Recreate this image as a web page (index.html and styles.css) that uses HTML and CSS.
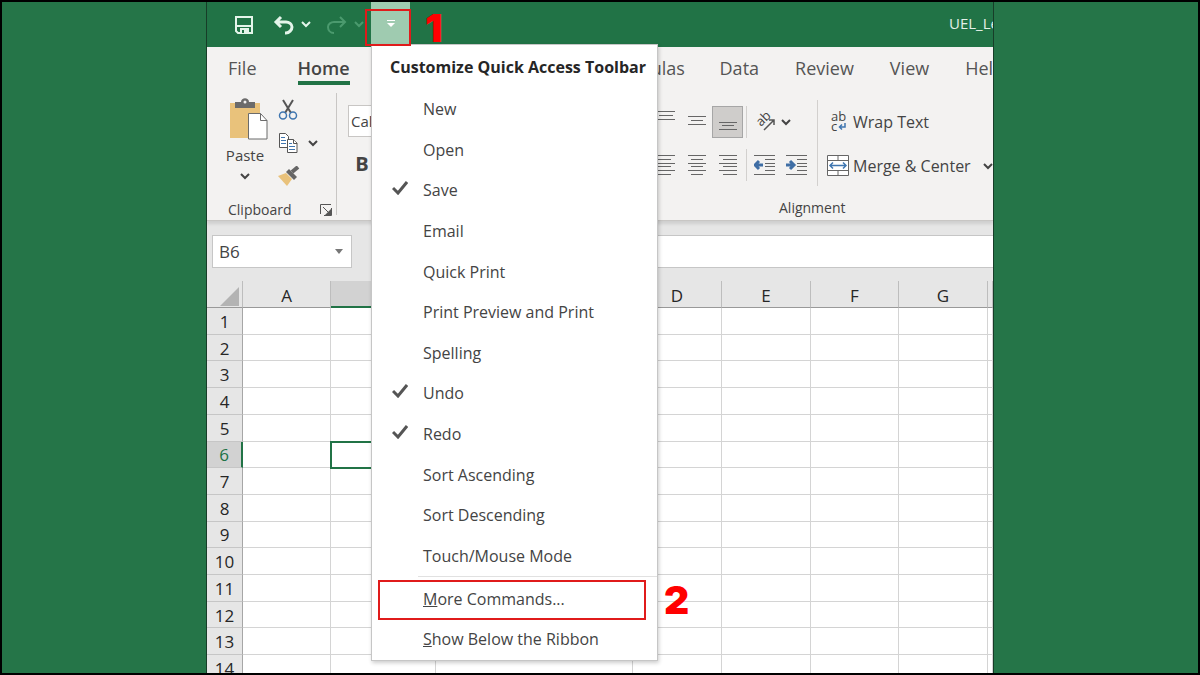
FILE: index.html
```html
<!DOCTYPE html>
<html lang="en">
<head>
    <meta charset="UTF-8">
    <meta name="viewport" content="width=device-width, initial-scale=1.0">
    <title>Customize Quick Access Toolbar</title>
    <link rel="stylesheet" href="styles.css">
</head>
<body>
    <div class="window">
        <header class="titlebar">
            <button class="tool save" aria-label="Save">
                <svg width="20" height="20" viewBox="0 0 20 20" fill="none" stroke="#e4f5ea" stroke-width="2"><path d="M2 2h16v16H4l-2-2zM2 11h16"/><path d="M6 13h9v5H6z" fill="#e4f5ea" stroke="none"/><path d="M8 15h2v3H8z" fill="#217346" stroke="none"/></svg>
            </button>
            <button class="tool" aria-label="Undo">
                <svg width="22" height="20" viewBox="0 0 22 20" fill="none" stroke="#e4f5ea" stroke-width="3"><path d="M8 2L3 7l5 5M3 7h10c3 0 6 2 6 5s-3 6-6 6h-1"/></svg>
            </button>
            <button class="tool arrow" aria-label="Undo list">
                <svg width="10" height="8" viewBox="0 0 10 8" fill="none" stroke="#e4f5ea" stroke-width="2"><path d="M1 1l4 4 4-4"/></svg>
            </button>
            <button class="tool redo" aria-label="Redo">
                <svg width="22" height="20" viewBox="0 0 22 20" fill="none" stroke="#4b9a6e" stroke-width="2"><path d="M14 2l5 5-5 5M19 7H8c-3 0-6 2-6 5s2 6 6 6"/></svg>
            </button>
            <button class="tool arrow" aria-label="Redo list">
                <svg width="10" height="8" viewBox="0 0 10 8" fill="none" stroke="#4b9a6e" stroke-width="2"><path d="M1 1l4 4 4-4"/></svg>
            </button>
            <div class="customize">
                <button class="customize-button" aria-label="Customize Quick Access Toolbar">
                    <svg width="8" height="8" viewBox="0 0 8 8" fill="#fff"><path d="M0 0h8v1H0zM0 3h8L4 7z"/></svg>
                </button>
                <div class="mark mark-one"></div>
                <span class="number number-one">1</span>

                <!-- Dropdown menu -->
                <div class="menu">
                    <h2>Customize Quick Access Toolbar</h2>
                    <div class="menu-list">
                        <button>New</button>
                        <button>Open</button>
                        <button class="checked"><svg class="check" viewBox="0 0 16 14"><path d="M1 7l5 5 9-11"/></svg>Save</button>
                        <button>Email</button>
                        <button>Quick Print</button>
                        <button>Print Preview and Print</button>
                        <button>Spelling</button>
                        <button class="checked"><svg class="check" viewBox="0 0 16 14"><path d="M1 7l5 5 9-11"/></svg>Undo</button>
                        <button class="checked"><svg class="check" viewBox="0 0 16 14"><path d="M1 7l5 5 9-11"/></svg>Redo</button>
                        <button>Sort Ascending</button>
                        <button>Sort Descending</button>
                        <button>Touch/Mouse Mode</button>
                    </div>
                    <div class="menu-more">
                        <button><u>M</u>ore Commands...</button>
                        <button><u>S</u>how Below the Ribbon</button>
                    </div>
                    <div class="mark mark-two"></div>
                    <span class="number number-two">2</span>
                </div>
            </div>
            <span class="filename">UEL_Learning</span>
        </header>

        <nav class="tabs">
            <a href="#">File</a>
            <a href="#" class="active">Home</a>
            <a href="#" class="formulas">Formulas</a>
            <a href="#">Data</a>
            <a href="#">Review</a>
            <a href="#">View</a>
            <a href="#">Help</a>
        </nav>

        <section class="ribbon">
            <div class="group clipboard">
                <div class="group-body">
                    <button class="paste">
                        <svg width="38" height="42" viewBox="0 0 38 42"><path d="M0 5h30v35H0z" fill="#e9c27b"/><path d="M5 4h6c0-5 8-5 8 0h6v6H5z" fill="#6b6b6b"/><circle cx="15" cy="4" r="1.5" fill="#f3f2f1"/><path d="M18.500 15.500h12l6.500 7v18.500H18.500z" fill="#fff" stroke="#6b6b6b"/><path d="M30.500 15.500v7H37" fill="none" stroke="#6b6b6b"/></svg>
                        <span>Paste</span>
                        <svg width="10" height="8" viewBox="0 0 10 8" class="chevron"><path d="M1 2l4 4 4-4"/></svg>
                    </button>
                    <div class="clip-tools">
                        <button aria-label="Cut">
                            <svg width="20" height="22" viewBox="0 0 20 22" fill="none"><path d="M5 1l8 13M15 1L7 14" stroke="#555" stroke-width="2"/><circle cx="5" cy="16.500" r="3.500" stroke="#3f76b0" stroke-width="1.500"/><circle cx="15" cy="16.500" r="3.500" stroke="#3f76b0" stroke-width="1.500"/></svg>
                        </button>
                        <button aria-label="Copy" class="copy">
                            <svg width="20" height="22" viewBox="0 0 20 22" fill="#fff" stroke="#555"><path d="M1.500 1.500h6l3 3v11h-9z"/><path d="M3 5.500h4M3 8.500h5M3 11.500h5" stroke="#3f76b0"/><path d="M9.500 7.500h6l3.500 3.500v9.500H9.500z"/><path d="M15.500 7.500v4H19"/><path d="M11 11.500h3M11 14.500h6M11 17.500h6" stroke="#3f76b0"/></svg>
                            <svg width="10" height="8" viewBox="0 0 10 8" class="chevron"><path d="M1 2l4 4 4-4"/></svg>
                        </button>
                        <button aria-label="Format Painter">
                            <svg width="22" height="20" viewBox="0 0 22 20"><path d="M0 10l8-3 6 6-5 7z" fill="#e9c27b"/><path d="M8 6l3-3 8 8-3 3z" fill="#666"/><path d="M14 6l6-5" stroke="#666" stroke-width="4"/></svg>
                        </button>
                    </div>
                </div>
                <div class="group-name">
                    <span>Clipboard</span>
                    <button aria-label="Clipboard options">
                        <svg width="12" height="12" viewBox="0 0 12 12" fill="none" stroke="#555"><path d="M.5 10V.5H11M3 3l7 7M11.500 4v7.500H4"/><path d="M5 11h6V5z" fill="#555" stroke="none"/></svg>
                    </button>
                </div>
            </div>

            <div class="group font">
                <input type="text" value="Calibri" aria-label="Font">
                <button class="bold">B</button>
            </div>

            <div class="group alignment">
                <div class="group-body">
                    <div class="align-rows">
                        <div class="align-row">
                            <button aria-label="Top Align"><svg width="18" height="22" viewBox="0 0 18 22" class="lines"><path d="M0 .5h18M2 4.500h14M0 8.500h18"/></svg></button>
                            <button aria-label="Middle Align"><svg width="18" height="22" viewBox="0 0 18 22" class="lines"><path d="M0 5.500h18M3 9.500h12M0 13.500h18"/></svg></button>
                            <button aria-label="Bottom Align" class="pressed"><svg width="18" height="22" viewBox="0 0 18 22" class="lines"><path d="M0 11.500h18M3 14.500h12M0 18.500h18"/></svg></button>
                            <button aria-label="Orientation" class="orientation">
                                <svg width="20" height="20" viewBox="0 0 20 20"><text x="0" y="0" transform="translate(5 15) rotate(-45)" class="icon-text">ab</text><path d="M8 18L18 8M13 8h5v5" fill="none" stroke="#555" stroke-width="1.500"/></svg>
                                <svg width="10" height="8" viewBox="0 0 10 8" class="chevron"><path d="M1 2l4 4 4-4"/></svg>
                            </button>
                        </div>
                        <div class="align-row">
                            <button aria-label="Align Left"><svg width="18" height="20" viewBox="0 0 18 20" class="lines"><path d="M0 .5h18M0 4.500h14M0 8.500h18M0 11.500h14M0 15.500h18M0 19.500h14"/></svg></button>
                            <button aria-label="Center"><svg width="18" height="20" viewBox="0 0 18 20" class="lines"><path d="M0 .5h18M3 4.500h12M0 8.500h18M3 11.500h12M0 15.500h18M3 19.500h12"/></svg></button>
                            <button aria-label="Align Right"><svg width="18" height="20" viewBox="0 0 18 20" class="lines"><path d="M0 .5h18M4 4.500h14M0 8.500h18M4 11.500h14M0 15.500h18M4 19.500h14"/></svg></button>
                            <button aria-label="Decrease Indent" class="indent"><svg width="21" height="20" viewBox="0 0 21 20" class="lines"><path d="M0 .5h21M11 4.500h10M11 8.500h10M11 11.500h10M11 15.500h10M0 19.500h21"/><path d="M9 10H2M5 6l-4 4 4 4" class="blue"/></svg></button>
                            <button aria-label="Increase Indent"><svg width="21" height="20" viewBox="0 0 21 20" class="lines"><path d="M0 .5h21M11 4.500h10M11 8.500h10M11 11.500h10M11 15.500h10M0 19.500h21"/><path d="M0 10h7M4 6l4 4-4 4" class="blue"/></svg></button>
                        </div>
                    </div>
                    <div class="wrap-tools">
                        <button>
                            <svg width="22" height="22" viewBox="0 0 22 22"><text x="4" y="10" class="icon-text">ab</text><text x="4" y="20" class="icon-text">c</text><path d="M18 12v4h-5M15 13.500L12.500 16l2.500 2.500" fill="none" stroke="#3f76b0" stroke-width="1.500"/></svg>
                            <span>Wrap Text</span>
                        </button>
                        <button>
                            <svg width="22" height="22" viewBox="0 0 22 22" fill="none" stroke="#666"><path d="M.5 .5h21v20H.5z" fill="#fff"/><path d="M.5 5.500h21M.5 15.500h21M11 .5v5M11 15.500v5"/><path d="M3 10.500h16M6 7.500l-3 3 3 3M16 7.500l3 3-3 3" stroke="#3f76b0" stroke-width="1.500"/></svg>
                            <span>Merge &amp; Center</span>
                            <svg width="10" height="8" viewBox="0 0 10 8" class="chevron"><path d="M1 2l4 4 4-4"/></svg>
                        </button>
                    </div>
                </div>
                <div class="group-name"><span>Alignment</span></div>
            </div>
        </section>

        <div class="formula-bar">
            <div class="name-box">
                <input type="text" value="B6" aria-label="Name Box">
                <svg width="8" height="5" viewBox="0 0 8 5"><path d="M0 0h8L4 5z" fill="#777"/></svg>
            </div>
            <input type="text" class="formula" aria-label="Formula Bar">
        </div>

        <div class="sheet">
            <table>
                <colgroup>
                    <col class="col-head"><col class="col-a"><col class="col-b"><col class="col-c"><col class="col-d"><col class="col-d"><col class="col-a"><col class="col-d"><col>
                </colgroup>
                <thead>
                    <tr><th class="corner"><svg width="19" height="19" viewBox="0 0 19 19"><path d="M19 0v19H0z" fill="#b3b3b3"/></svg></th><th>A</th><th class="selected"></th><th></th><th>D</th><th>E</th><th>F</th><th>G</th><th></th></tr>
                </thead>
                <tbody>
                    <tr><th>1</th><td></td><td></td><td></td><td></td><td></td><td></td><td></td><td></td></tr>
                    <tr><th>2</th><td></td><td></td><td></td><td></td><td></td><td></td><td></td><td></td></tr>
                    <tr><th>3</th><td></td><td></td><td></td><td></td><td></td><td></td><td></td><td></td></tr>
                    <tr><th>4</th><td></td><td></td><td></td><td></td><td></td><td></td><td></td><td></td></tr>
                    <tr><th>5</th><td></td><td></td><td></td><td></td><td></td><td></td><td></td><td></td></tr>
                    <tr class="current"><th>6</th><td></td><td class="cell-active"></td><td></td><td></td><td></td><td></td><td></td><td></td></tr>
                    <tr><th>7</th><td></td><td></td><td></td><td></td><td></td><td></td><td></td><td></td></tr>
                    <tr><th>8</th><td></td><td></td><td></td><td></td><td></td><td></td><td></td><td></td></tr>
                    <tr><th>9</th><td></td><td></td><td></td><td></td><td></td><td></td><td></td><td></td></tr>
                    <tr><th>10</th><td></td><td></td><td></td><td></td><td></td><td></td><td></td><td></td></tr>
                    <tr><th>11</th><td></td><td></td><td></td><td></td><td></td><td></td><td></td><td></td></tr>
                    <tr><th>12</th><td></td><td></td><td></td><td></td><td></td><td></td><td></td><td></td></tr>
                    <tr><th>13</th><td></td><td></td><td></td><td></td><td></td><td></td><td></td><td></td></tr>
                    <tr><th>14</th><td></td><td></td><td></td><td></td><td></td><td></td><td></td><td></td></tr>
                </tbody>
            </table>
        </div>
    </div>
</body>
</html>
```
FILE: styles.css
```css
* {
    box-sizing: border-box;
}

body {
    margin: 0;
    height: 100vh;
    padding: 0 204px;
    border: 2px solid #000;
    background-color: #257548;
    font-family: "Open Sans", "Noto Sans", sans-serif;
    font-size: 16px;
    color: #444;
    overflow: hidden;
}

button {
    display: flex;
    align-items: center;
    justify-content: center;
    padding: 0;
    border: none;
    background: none;
    font: inherit;
    color: inherit;
    cursor: pointer;
}

svg {
    display: block;
    flex-shrink: 0;
}

.window {
    display: flex;
    flex-direction: column;
    height: 100%;
    border: 1px solid #173d28;
    border-width: 0 1px;
    background-color: #e6e6e6;
    overflow: hidden;
}

/* Title bar */
.titlebar {
    display: flex;
    align-items: center;
    flex-shrink: 0;
    height: 45px;
    padding-left: 27px;
    background-color: #217346;
}

.save {
    margin-right: 19px;
}

.arrow {
    margin-left: 6px;
}

.redo {
    margin-left: 15px;
}

.customize {
    position: relative;
    align-self: stretch;
    margin-left: 7px;
    z-index: 1;
}

.customize-button {
    width: 39px;
    height: 44px;
    background-color: #9fcbb0;
}

.filename {
    margin-left: auto;
    width: 44px;
    font-size: 15px;
    line-height: 24px;
    padding-bottom: 3px;
    color: #e4f0e8;
    white-space: nowrap;
    overflow: hidden;
}

.mark {
    position: absolute;
    border: 2px solid #e01b1b;
    pointer-events: none;
}

.mark-one {
    top: 7px;
    left: -6px;
    width: 46px;
    height: 37px;
    z-index: 1;
}

.number {
    position: absolute;
    font-family: Inter, sans-serif;
    font-size: 39px;
    font-weight: 900;
    line-height: 40px;
    color: #f00;
}

.number-one {
    top: 6px;
    left: 54px;
}

/* Menu */
.menu {
    position: absolute;
    top: 42px;
    left: 0;
    width: 287px;
    padding-bottom: 1px;
    border: 1px solid #c6c6c6;
    background-color: #fff;
    box-shadow: 1px 2px 4px rgba(0, 0, 0, 0.2);
    color: #444;
}

.menu h2 {
    margin: 0;
    padding-left: 18px;
    font-size: 16px;
    line-height: 44px;
    color: #262626;
    white-space: nowrap;
}

.menu-list {
    display: grid;
    grid-auto-rows: 1fr;
    height: 487px;
}

.menu button {
    justify-content: flex-start;
    width: 100%;
    padding-left: 51px;
    white-space: pre;
}

.menu .checked {
    padding-left: 20px;
}

.check {
    width: 16px;
    height: 14px;
    margin: 0 15px 4px 0;
    fill: none;
    stroke: #555;
    stroke-width: 3;
}

.menu-more {
    margin-left: 46px;
    padding-top: 2px;
    border-top: 1px solid #e1e1e1;
}

.menu-more button {
    height: 40px;
    padding-left: 5px;
}

.mark-two {
    left: 6px;
    bottom: 40px;
    width: 268px;
    height: 40px;
}

.number-two {
    left: 292px;
    bottom: 40px;
}

/* Tabs */
.tabs {
    display: flex;
    flex-shrink: 0;
    gap: 36px;
    height: 43px;
    padding-left: 21px;
    background-color: #f3f2f1;
    overflow: hidden;
}

.tabs a {
    height: 38px;
    font-size: 18px;
    line-height: 42px;
    color: #555;
    text-decoration: none;
    white-space: nowrap;
}

.tabs .active {
    margin-left: 5px;
    border-bottom: 4px solid #217346;
    font-weight: 600;
    color: #444;
}

.tabs .formulas {
    width: 77px;
    margin-left: 221px;
}

/* Ribbon */
.ribbon {
    display: flex;
    flex-shrink: 0;
    height: 131px;
    background-color: #f3f2f1;
    border-bottom: 1px solid #c8c6c4;
    box-shadow: 0 3px 3px rgba(0, 0, 0, 0.1);
    overflow: hidden;
}

.group {
    display: flex;
    flex-direction: column;
    flex-shrink: 0;
}

.group-body {
    display: flex;
    height: 108px;
}

.clipboard {
    width: 130px;
    margin: 3px 0 5px;
    border-right: 1px solid #c8c6c4;
}

.clipboard .group-body {
    flex-shrink: 0;
    height: 105px;
}

.paste {
    flex-direction: column;
    justify-content: flex-start;
    width: 62px;
    margin-left: 7px;
    padding-top: 5px;
}

.paste span {
    margin: 3px 0 5px;
    font-size: 15px;
    line-height: 24px;
}

.paste svg:first-child {
    margin-left: 8px;
}

.chevron {
    fill: none;
    stroke: #444;
    stroke-width: 2;
}

.clip-tools {
    display: flex;
    flex-direction: column;
    gap: 11px;
    padding: 6px 0 0 2px;
}

.clip-tools button {
    height: 22px;
    justify-content: flex-start;
}

.copy {
    gap: 10px;
}

.group-name {
    display: flex;
    font-size: 14px;
    line-height: 24px;
}

.clipboard .group-name {
    gap: 28px;
    padding-left: 21px;
}

.font {
    width: 309px;
    padding: 15px 11px;
    gap: 15px;
}

.font input {
    width: 100px;
    height: 32px;
    padding: 0 2px;
    border: 1px solid #c8c6c4;
    background-color: #fff;
    font: inherit;
    font-size: 15px;
    color: #444;
}

.bold {
    width: 28px;
    font-size: 20px;
    font-weight: 700;
    line-height: 24px;
}

.alignment {
    flex-grow: 1;
}

.align-rows {
    display: flex;
    flex-direction: column;
    gap: 11px;
    width: 172px;
    height: 86px;
    margin-top: 10px;
    padding: 6px 0 0 4px;
    border-right: 1px solid #d2d0ce;
}

.align-row {
    display: flex;
    height: 32px;
}

.align-row button {
    width: 31px;
    height: 32px;
}

.align-row .pressed {
    width: 31px;
    border: 1px solid #a6a6a6;
    background-color: #cfcdcb;
}

.lines {
    fill: none;
    stroke: #666;
}

.lines .blue {
    stroke: #3f6ea5;
    stroke-width: 3;
}

.align-row .orientation {
    gap: 5px;
    width: 50px;
    margin-left: 3px;
    padding-left: 4px;
    border-left: 1px solid #d2d0ce;
}

.align-row .indent {
    width: 35px;
    margin-left: 3px;
    border-left: 1px solid #d2d0ce;
}

.icon-text {
    font-size: 13px;
    fill: #444;
}

.wrap-tools {
    display: flex;
    flex-direction: column;
    gap: 12px;
    padding: 16px 0 0 9px;
}

.wrap-tools button {
    gap: 4px;
    height: 32px;
    justify-content: flex-start;
    white-space: nowrap;
}

.wrap-tools .chevron {
    margin-left: 8px;
}

.alignment .group-name {
    padding-left: 133px;
}

/* Formula bar */
.formula-bar {
    display: flex;
    flex-shrink: 0;
    gap: 24px;
    height: 60px;
    padding: 14px 0 0 5px;
}

.name-box {
    display: flex;
    align-items: center;
    width: 140px;
    height: 33px;
    padding-right: 8px;
    border: 1px solid #c6c6c6;
    background-color: #fff;
}

.name-box input {
    flex: 1;
    min-width: 0;
    padding: 0 6px;
    border: none;
    background: none;
    font: inherit;
    font-size: 17px;
    color: #444;
}

.formula {
    flex: 1;
    height: 33px;
    border: 1px solid #c6c6c6;
    border-right: none;
    background-color: #fff;
}

/* Sheet */
.sheet {
    flex: 1;
    min-height: 0;
    overflow: hidden;
}

table {
    width: 100%;
    height: 401px;
    border-collapse: separate;
    border-spacing: 0;
    table-layout: fixed;
    background-color: #fff;
}

.col-head {
    width: 36px;
}

.col-a {
    width: 88px;
}

.col-b {
    width: 105px;
}

.col-c {
    width: 197px;
}

.col-d {
    width: 89px;
}

th,
td {
    padding: 0;
    border-right: 1px solid #d4d4d4;
    border-bottom: 1px solid #d4d4d4;
}

th {
    padding-top: 2px;
    background-color: #e6e6e6;
    font-size: 17px;
    font-weight: 400;
    line-height: 22px;
    color: #262626;
}

thead th {
    height: 27px;
    padding-top: 4px;
    border-right-color: #bdbdbd;
    border-bottom-color: #999;
}

tbody th {
    border-right-color: #a6a6a6;
    border-bottom-color: #c6c6c6;
}

.corner svg {
    margin: 0 3px 0 auto;
}

thead .selected {
    background-color: #d2d2d2;
    border-bottom: 2px solid #217346;
}

.current th {
    border-right: 2px solid #217346;
    background-color: #d2d2d2;
    color: #217346;
}

.cell-active {
    outline: 2px solid #217346;
    outline-offset: -1px;
}
```
